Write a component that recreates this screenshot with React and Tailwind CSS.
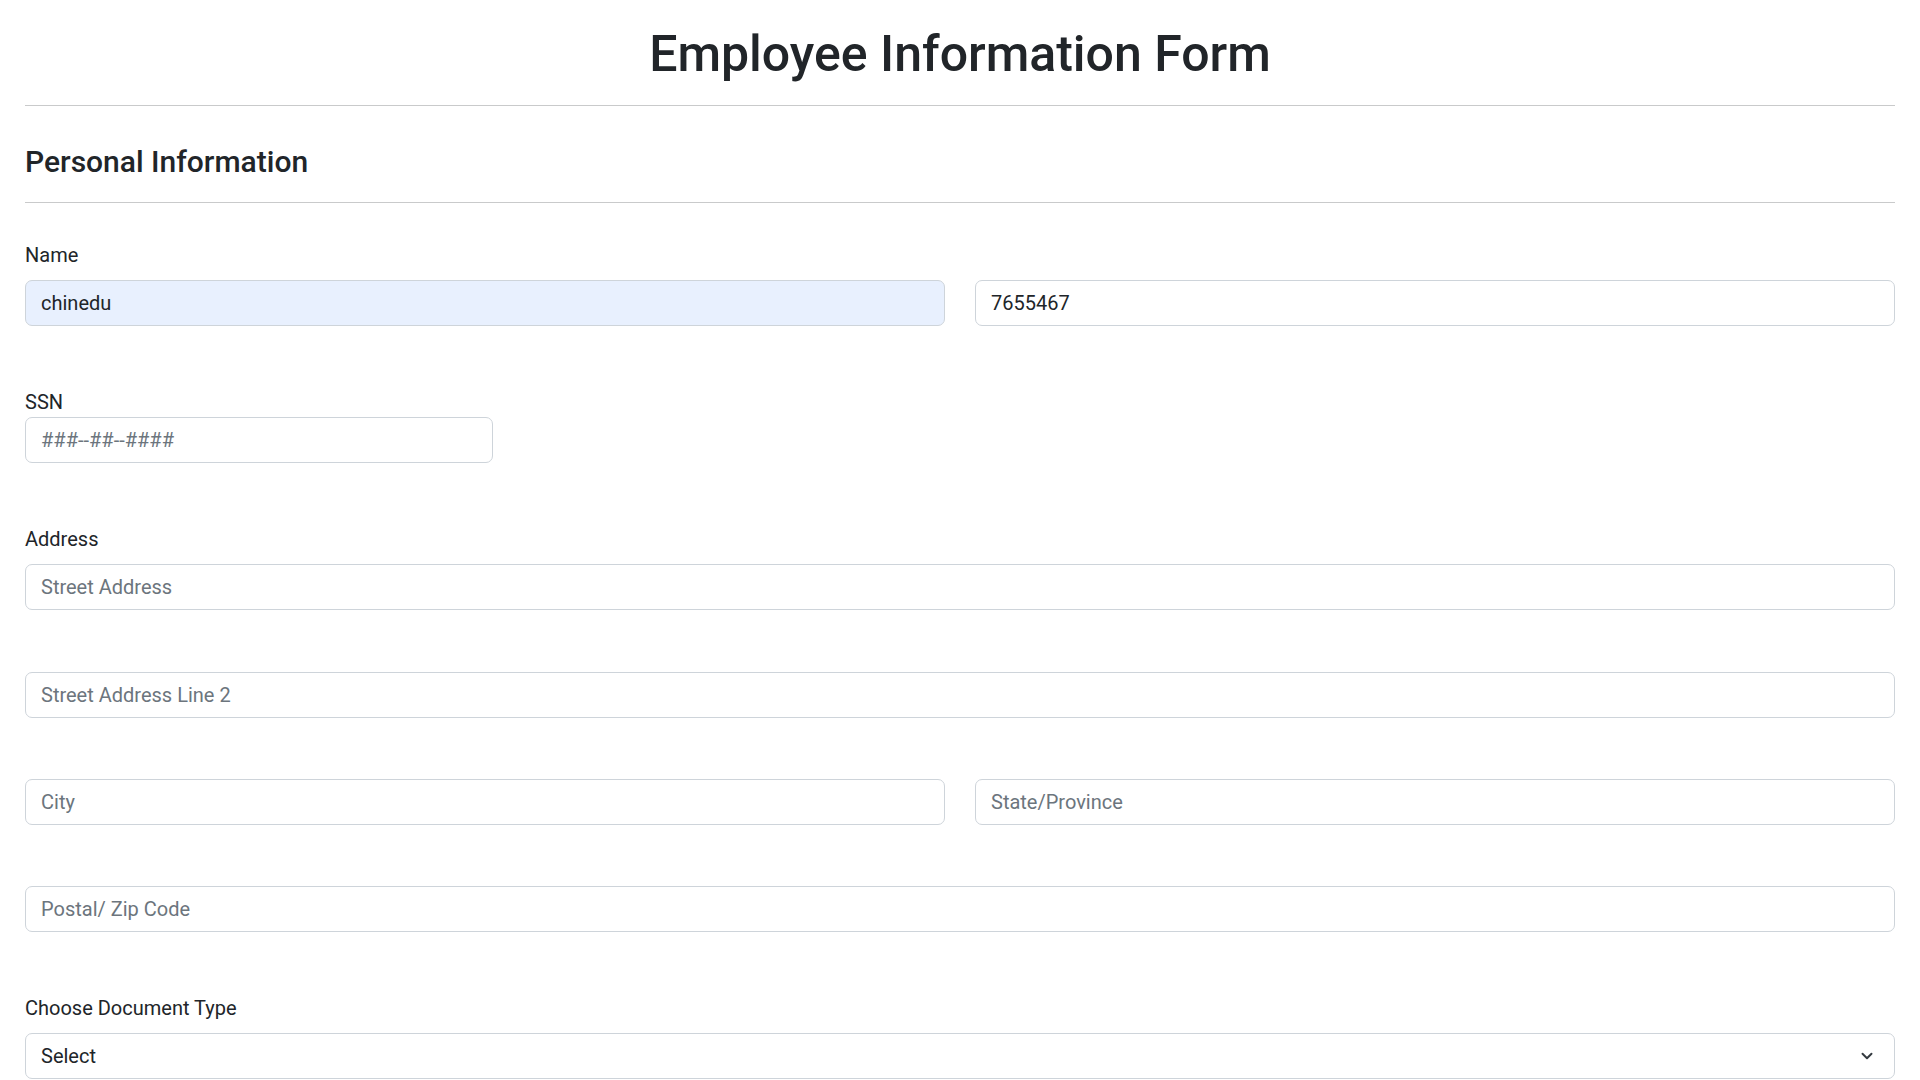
import { ChevronDown } from 'lucide-react';

const inputCls =
  'block h-[46px] px-[15px] text-[20px] text-[#212529] border border-[#ced4da] rounded-[7px] outline-none placeholder:text-[#6c757d]';

function Label({ children, className = '' }) {
  return <label className={`block text-[20px] leading-[30px] ${className}`}>{children}</label>;
}

export default function App() {
  return (
    <div className="px-[25px] pb-10 font-['Roboto',sans-serif] text-[#212529] bg-white min-h-screen">
      <h1 className="text-center text-[50px] font-medium leading-[1.2] pt-[24px] mb-[21px]">Employee Information Form</h1>
      <hr className="border-0 border-t border-[#c9cacb]" />

      <h2 className="text-[30px] font-medium leading-[1.2] mt-[38px] mb-[22px]">Personal Information</h2>
      <hr className="border-0 border-t border-[#c9cacb]" />

      <form className="pt-[37px]">
        <div className="mb-[61px]">
          <Label className="mb-[10px]">Name</Label>
          <div className="grid grid-cols-2 gap-[30px]">
            <input className={`${inputCls} w-full bg-[#e8f0fe] border-[#c9d1dc]`} defaultValue="chinedu" />
            <input className={`${inputCls} w-full bg-white`} defaultValue="7655467" />
          </div>
        </div>

        <div className="mb-[61px]">
          <Label>SSN</Label>
          <input className={`${inputCls} w-[468px] bg-white`} placeholder="###--##--####" />
        </div>

        <div className="mb-[61px]">
          <Label className="mb-[10px]">Address</Label>
          <input className={`${inputCls} w-full bg-white mb-[62px]`} placeholder="Street Address" />
          <input className={`${inputCls} w-full bg-white mb-[61px]`} placeholder="Street Address Line 2" />
          <div className="grid grid-cols-2 gap-[30px] mb-[61px]">
            <input className={`${inputCls} w-full bg-white`} placeholder="City" />
            <input className={`${inputCls} w-full bg-white`} placeholder="State/Province" />
          </div>
          <input className={`${inputCls} w-full bg-white`} placeholder="Postal/ Zip Code" />
        </div>

        <div>
          <Label className="mb-[10px]">Choose Document Type</Label>
          <div className="relative">
            <select className={`${inputCls} w-full bg-white appearance-none pr-12`} defaultValue="">
              <option value="">Select</option>
              <option value="passport">Passport</option>
              <option value="license">Driver's License</option>
            </select>
            <ChevronDown className="absolute right-[19px] top-1/2 -translate-y-1/2 w-[18px] h-[18px] text-[#343a40] pointer-events-none" strokeWidth={2.6} />
          </div>
        </div>
      </form>
    </div>
  );
}
